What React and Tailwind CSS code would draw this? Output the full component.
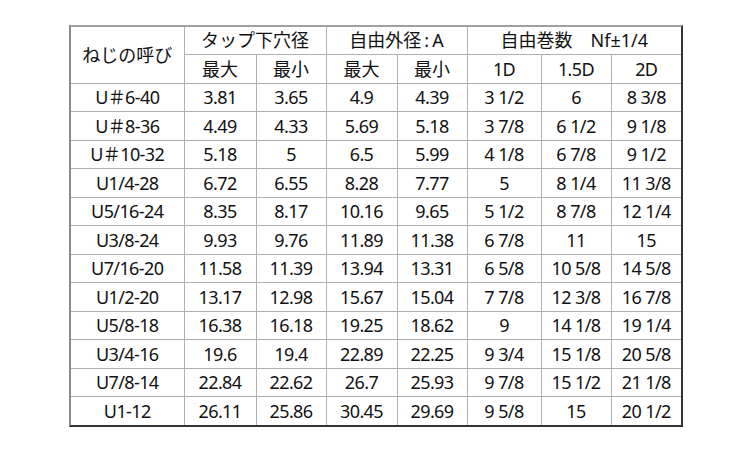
import React from "react";

const rows = [
  ["U＃6-40", "3.81", "3.65", "4.9", "4.39", "3 1/2", "6", "8 3/8"],
  ["U＃8-36", "4.49", "4.33", "5.69", "5.18", "3 7/8", "6 1/2", "9 1/8"],
  ["U＃10-32", "5.18", "5", "6.5", "5.99", "4 1/8", "6 7/8", "9 1/2"],
  ["U1/4-28", "6.72", "6.55", "8.28", "7.77", "5", "8 1/4", "11 3/8"],
  ["U5/16-24", "8.35", "8.17", "10.16", "9.65", "5 1/2", "8 7/8", "12 1/4"],
  ["U3/8-24", "9.93", "9.76", "11.89", "11.38", "6 7/8", "11", "15"],
  ["U7/16-20", "11.58", "11.39", "13.94", "13.31", "6 5/8", "10 5/8", "14 5/8"],
  ["U1/2-20", "13.17", "12.98", "15.67", "15.04", "7 7/8", "12 3/8", "16 7/8"],
  ["U5/8-18", "16.38", "16.18", "19.25", "18.62", "9", "14 1/8", "19 1/4"],
  ["U3/4-16", "19.6", "19.4", "22.89", "22.25", "9 3/4", "15 1/8", "20 5/8"],
  ["U7/8-14", "22.84", "22.62", "26.7", "25.93", "9 7/8", "15 1/2", "21 1/8"],
  ["U1-12", "26.11", "25.86", "30.45", "29.69", "9 5/8", "15", "20 1/2"],
];

const widths = [113, 72, 70, 71, 70, 74, 70, 70];

const cell = "border border-[#b0b0b0] text-center align-middle p-0 leading-none";

export default function App() {
  return (
    <div className="w-[750px] h-[450px] bg-white overflow-hidden font-['Noto_Sans','Noto_Sans_CJK_JP',sans-serif] text-[#111]">
      <div className="ml-[69px] mt-[25px] w-[614px] border-t-2 border-l-2 border-t-[#a0a0a0] border-l-[#8c8c8c] border-r-2 border-b-2 border-r-[#333] border-b-[#333]">
        <table className="border-collapse border-hidden table-fixed w-[610px] text-[18px] tracking-[-0.6px]">
          <colgroup>
            {widths.map((w, i) => (
              <col key={i} style={{ width: w }} />
            ))}
          </colgroup>
          <thead>
            <tr className="h-[27px]">
              <th rowSpan={2} className={`${cell} font-normal tracking-normal`}>ねじの呼び</th>
              <th colSpan={2} className={`${cell} font-normal tracking-normal`}>タップ下穴径</th>
              <th colSpan={2} className={`${cell} font-normal tracking-normal`}>
                自由外径<span className="mx-[3px]">:</span>A
              </th>
              <th colSpan={3} className={`${cell} font-normal tracking-normal`}>自由巻数　Nf±1/4</th>
            </tr>
            <tr className="h-[29px]">
              <th className={`${cell} font-normal tracking-normal`}>最大</th>
              <th className={`${cell} font-normal tracking-normal`}>最小</th>
              <th className={`${cell} font-normal tracking-normal`}>最大</th>
              <th className={`${cell} font-normal tracking-normal`}>最小</th>
              <th className={`${cell} font-normal`}>1D</th>
              <th className={`${cell} font-normal`}>1.5D</th>
              <th className={`${cell} font-normal`}>2D</th>
            </tr>
          </thead>
          <tbody>
            {rows.map((r, i) => (
              <tr key={i} className={i % 2 === 0 ? "h-[28px]" : "h-[29px]"}>
                {r.map((v, j) => (
                  <td key={j} className={cell}>{v}</td>
                ))}
              </tr>
            ))}
          </tbody>
        </table>
      </div>
    </div>
  );
}
